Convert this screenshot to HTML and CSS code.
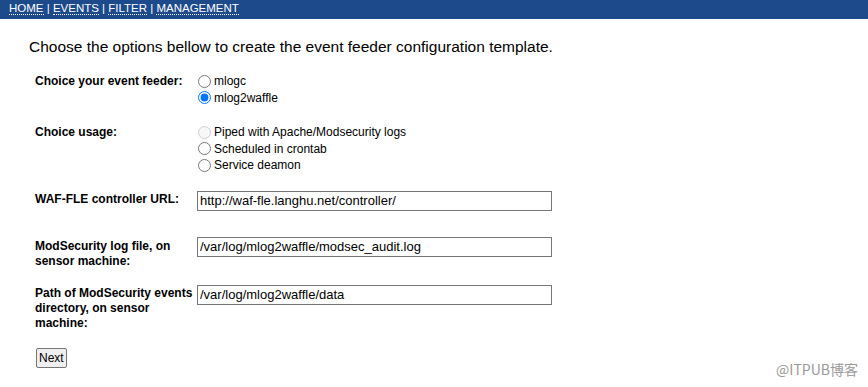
FILE: index.html
```html
<!DOCTYPE html>
<html>
<head>
<meta charset="utf-8">
<link rel="stylesheet" href="styles.css">
</head>
<body>
<div class="nav"><a href="#">HOME</a> | <a href="#">EVENTS</a> | <a href="#">FILTER</a> | <a href="#">MANAGEMENT</a></div>
<h1 class="title">Choose the options bellow to create the event feeder configuration template.</h1>
<form class="form">
  <div class="row row-feeder">
    <div class="lbl">Choice your event feeder:</div>
    <div class="opts">
      <label class="opt"><input type="radio" name="feeder"> mlogc</label>
      <label class="opt"><input type="radio" name="feeder" checked> mlog2waffle</label>
    </div>
  </div>
  <div class="row row-usage">
    <div class="lbl">Choice usage:</div>
    <div class="opts">
      <label class="opt"><input type="radio" name="usage" disabled> Piped with Apache/Modsecurity logs</label>
      <label class="opt"><input type="radio" name="usage"> Scheduled in crontab</label>
      <label class="opt"><input type="radio" name="usage"> Service deamon</label>
    </div>
  </div>
  <div class="row row-url">
    <div class="lbl">WAF-FLE controller URL:</div>
    <div><input class="txt" type="text" value="http://waf-fle.langhu.net/controller/"></div>
  </div>
  <div class="row row-log">
    <div class="lbl">ModSecurity log file, on sensor machine:</div>
    <div><input class="txt" type="text" value="/var/log/mlog2waffle/modsec_audit.log"></div>
  </div>
  <div class="row row-path">
    <div class="lbl">Path of ModSecurity events directory, on sensor machine:</div>
    <div><input class="txt" type="text" value="/var/log/mlog2waffle/data"></div>
  </div>
  <button type="button" class="next">Next</button>
</form>
<div class="mark">@ITPUB博客</div>
</body>
</html>
```
FILE: styles.css
```css
html, body {
  margin: 0;
  padding: 0;
  background: #fff;
  font-family: "Liberation Sans", Arial, sans-serif;
  color: #000;
}
.nav {
  background: #1c4a8b;
  height: 19px;
  padding: 0 0 0 9px;
  font-size: 11.5px;
  line-height: 16px;
  color: #fff;
}
.nav a {
  color: #fff;
  text-decoration: none;
  border-bottom: 1px dotted #fff;
}
.title {
  margin: 18px 0 0 29px;
  font-size: 15.5px;
  font-weight: normal;
  line-height: 19px;
}
.form {
  margin: 17px 0 0 35px;
}
.row {
  display: grid;
  grid-template-columns: 162px 355px;
  align-items: start;
  font-size: 12px;
}
.lbl {
  font-weight: bold;
  line-height: 15px;
  padding-right: 4px;
}
.opts {
  display: flex;
  flex-direction: column;
}
.opt {
  display: flex;
  align-items: center;
  height: 16.5px;
  line-height: 16px;
  gap: 3px;
}
.opt input {
  margin: 0 0 0 1px;
  width: 13px;
  height: 13px;
}
.row-feeder .lbl, .row-usage .lbl { padding-top: 1px; }
.row-usage { margin-top: 18px; }
.row-url { margin-top: 17px; }
.row-log { margin-top: 26px; }
.row-path { margin-top: 16px; }
.row-url .lbl { padding-top: 1px; }
.row-log .lbl { padding-top: 2px; }
.row-path .lbl { padding-top: 1px; }
.txt {
  box-sizing: border-box;
  width: 355px;
  height: 20px;
  margin: 0;
  border: 1px solid #767676;
  padding: 0 2px;
  font-family: "Liberation Sans", Arial, sans-serif;
  font-size: 13px;
  color: #000;
}
.next {
  margin-top: 17px;
  margin-left: 1px;
  height: 20px;
  padding: 0 2px;
  font-family: "Liberation Sans", Arial, sans-serif;
  font-size: 12px;
  border: 1px solid #767676;
  border-radius: 2px;
  background: #efefef;
  color: #000;
}
.mark {
  position: absolute;
  right: 10px;
  bottom: 8px;
  font-family: "Noto Sans CJK SC", sans-serif;
  font-size: 14px;
  color: #9a9a9a;
}
```
